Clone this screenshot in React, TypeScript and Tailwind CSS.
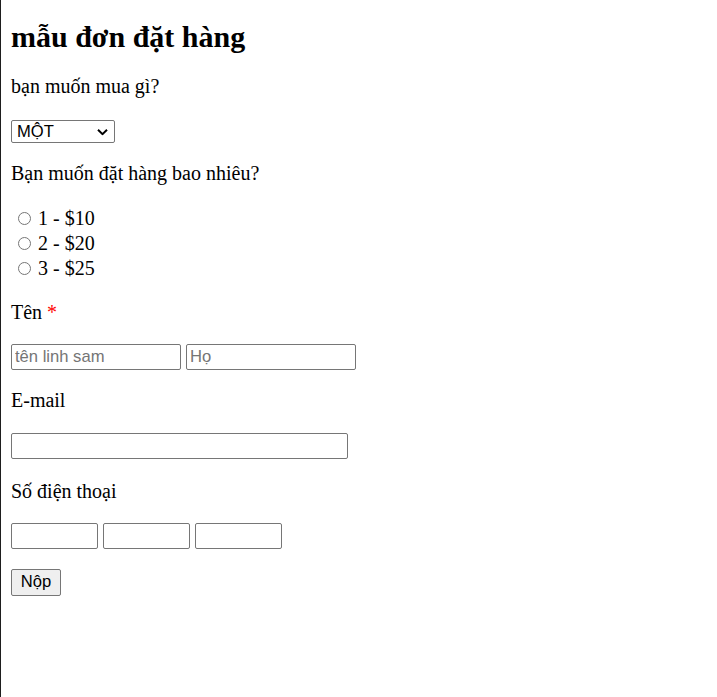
export default function App() {
  const field =
    "h-[26px] rounded-[2px] border border-[#767676] bg-white px-[3px] font-['Liberation_Sans',Arial,sans-serif] text-[16.6px] text-black placeholder:text-[#757575] outline-none";

  return (
    <div className="min-h-[697px] border-l border-[#1e1e1e] bg-white px-[10px] pt-[20px] font-['Liberation_Serif','Times_New_Roman',serif] text-[20px] text-black">
      <h1 className="text-[30px] leading-[34px] font-bold">mẫu đơn đặt hàng</h1>

      <p className="mt-[21px] leading-[23px]">bạn muốn mua gì?</p>

      <div className="relative mt-[22px] w-[104px]">
        <select
          defaultValue="1"
          className="block h-[23px] w-[104px] appearance-none rounded-[2px] border border-[#767676] bg-white pl-[5px] font-['Liberation_Sans',Arial,sans-serif] text-[16.6px] leading-[21px] text-black outline-none"
        >
          <option value="1">MỘT</option>
          <option value="2">HAI</option>
          <option value="3">BA</option>
        </select>
        <svg
          className="pointer-events-none absolute top-1/2 right-[7px] -translate-y-1/2"
          width="11"
          height="7"
          viewBox="0 0 11 7"
        >
          <path d="M1 1.2 L5.5 5.6 L10 1.2" fill="none" stroke="#000" strokeWidth="2" />
        </svg>
      </div>

      <p className="mt-[19px] leading-[23px]">Bạn muốn đặt hàng bao nhiêu?</p>

      <div className="mt-[21px]">
        {["1 - $10", "2 - $20", "3 - $25"].map((label) => (
          <label key={label} className="flex h-[25px] items-center">
            <input
              type="radio"
              name="qty"
              className="m-0 ml-[7px] h-[13px] w-[13px] appearance-none rounded-full border border-[#767676] bg-white"
            />
            <span className="ml-[7px] leading-[25px]">{label}</span>
          </label>
        ))}
      </div>

      <p className="mt-[20px] leading-[23px]">
        Tên <span className="text-[#ff0000]">*</span>
      </p>

      <div className="mt-[20px] flex gap-[5px]">
        <input type="text" placeholder="tên linh sam" className={`${field} w-[170px]`} />
        <input type="text" placeholder="Họ" className={`${field} w-[170px]`} />
      </div>

      <p className="mt-[19px] leading-[23px]">E-mail</p>

      <input type="email" className={`${field} mt-[21px] block w-[337px]`} />

      <p className="mt-[21px] leading-[23px]">Số điện thoại</p>

      <div className="mt-[20px] flex gap-[5px]">
        <input type="text" className={`${field} w-[87px]`} />
        <input type="text" className={`${field} w-[87px]`} />
        <input type="text" className={`${field} w-[87px]`} />
      </div>

      <button
        type="submit"
        className="mt-[20px] block h-[27px] w-[50px] rounded-[2px] border border-[#767676] bg-[#efefef] font-['Liberation_Sans',Arial,sans-serif] text-[16.6px] text-black"
      >
        Nộp
      </button>
    </div>
  );
}
